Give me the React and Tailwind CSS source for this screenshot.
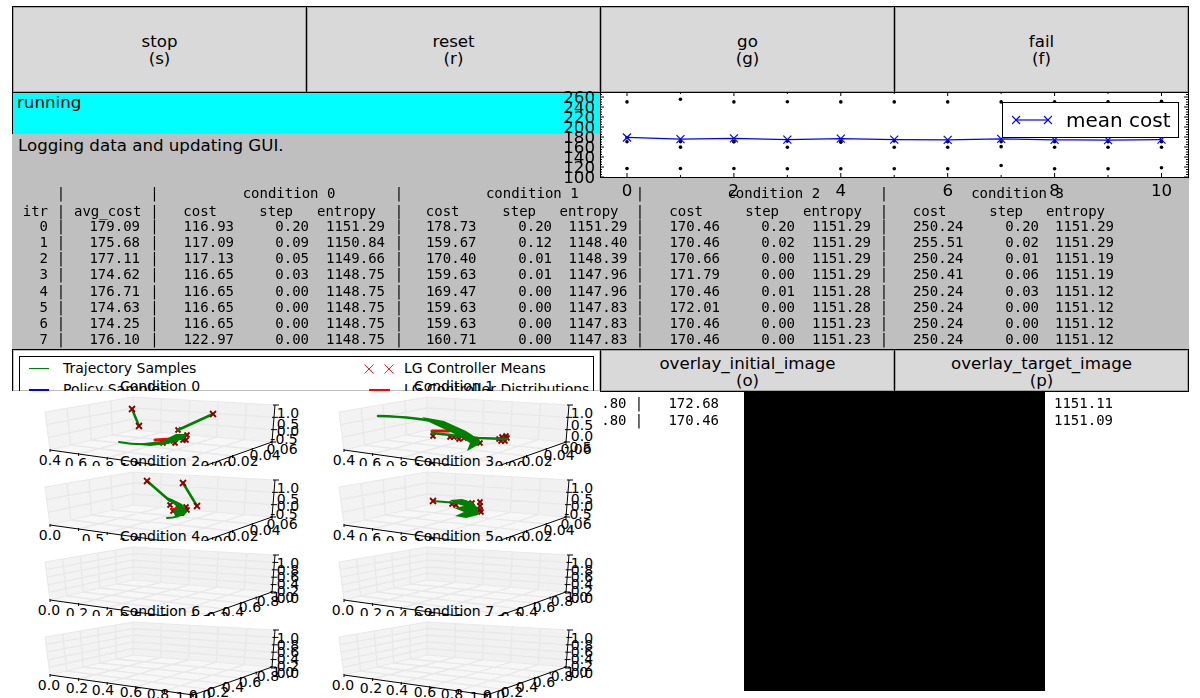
import React from 'react';

const GREEN = '#008000';
const DARK = '#8b0000';

const logRows = [
  ['0', '179.09', '116.93', '0.20', '1151.29', '178.73', '0.20', '1151.29', '170.46', '0.20', '1151.29', '250.24', '0.20', '1151.29'],
  ['1', '175.68', '117.09', '0.09', '1150.84', '159.67', '0.12', '1148.40', '170.46', '0.02', '1151.29', '255.51', '0.02', '1151.29'],
  ['2', '177.11', '117.13', '0.05', '1149.66', '170.40', '0.01', '1148.39', '170.66', '0.00', '1151.29', '250.24', '0.01', '1151.19'],
  ['3', '174.62', '116.65', '0.03', '1148.75', '159.63', '0.01', '1147.96', '171.79', '0.00', '1151.29', '250.41', '0.06', '1151.19'],
  ['4', '176.71', '116.65', '0.00', '1148.75', '169.47', '0.00', '1147.96', '170.46', '0.01', '1151.28', '250.24', '0.03', '1151.12'],
  ['5', '174.63', '116.65', '0.00', '1148.75', '159.63', '0.00', '1147.83', '172.01', '0.00', '1151.28', '250.24', '0.00', '1151.12'],
  ['6', '174.25', '116.65', '0.00', '1148.75', '159.63', '0.00', '1147.83', '170.46', '0.00', '1151.23', '250.24', '0.00', '1151.12'],
  ['7', '176.10', '122.97', '0.00', '1148.75', '160.71', '0.00', '1147.83', '170.46', '0.00', '1151.23', '250.24', '0.00', '1151.12'],
];

const meanCost = [179.09, 175.68, 177.11, 174.62, 176.71, 174.63, 174.25, 176.1, 174.2, 173.9, 174.6];
const condCosts = [
  [116.93, 178.73, 170.46, 250.24],
  [117.09, 159.67, 170.46, 255.51],
  [117.13, 170.4, 170.66, 250.24],
  [116.65, 159.63, 171.79, 250.41],
  [116.65, 169.47, 170.46, 250.24],
  [116.65, 159.63, 172.01, 250.24],
  [116.65, 159.63, 170.46, 250.24],
  [122.97, 160.71, 170.46, 250.24],
  [116.65, 159.63, 170.46, 250.3],
  [116.65, 159.63, 170.46, 250.24],
  [118.5, 159.63, 170.46, 251.5],
];

const ROW = "grid grid-cols-[36px_26px_66px_29px_65px_75px_76px_28px_63.5px_75.5px_75.5px_25px_67.5px_75px_76px_26px_66.5px_75.5px_75px] leading-[16.25px] whitespace-pre";

const Button = ({ name, hotkey, tall }) => (
  <button className={`border border-black bg-[#d9d9d9] -mr-px text-center leading-[17px] text-[16.67px] shadow-[inset_0_0_0_1px_rgba(0,0,0,0.25)] ${tall ? 'h-[87px]' : 'h-[43px] pt-[2px]'}`}>
    {name}
    <br />
    {hotkey}
  </button>
);

const Sep = () => <div className="text-center">|</div>;
const Num = ({ children }) => <div className="text-right">{children}</div>;

const LogTable = () => (
  <div className="font-['DejaVu_Sans_Mono',monospace] text-[14px] mt-[29px] will-change-transform">
    <div className={`${ROW} h-[18px]`}>
      <div /><Sep /><div /><Sep />
      {[0, 1, 2, 3].map((c) => (
        <React.Fragment key={c}>
          <div className="col-span-3 text-center pl-[24px]">condition {c}</div>
          {c < 3 ? <Sep /> : <div />}
        </React.Fragment>
      ))}
    </div>
    <div className={`${ROW} h-[14.5px]`}>
      <Num>itr</Num><Sep /><Num>avg_cost</Num><Sep />
      {[0, 1, 2, 3].map((c) => (
        <React.Fragment key={c}>
          <div className="text-right pr-[17px]">cost</div>
          <div className="text-right pr-[16px]">step</div>
          <div className="text-right pr-[9px]">entropy</div>
          {c < 3 ? <Sep /> : <div />}
        </React.Fragment>
      ))}
    </div>
    {logRows.map((r) => (
      <div className={`${ROW} h-[16.25px]`} key={r[0]}>
        <Num>{r[0]}</Num><Sep /><Num>{r[1]}</Num><Sep />
        <Num>{r[2]}</Num><Num>{r[3]}</Num><Num>{r[4]}</Num><Sep />
        <Num>{r[5]}</Num><Num>{r[6]}</Num><Num>{r[7]}</Num><Sep />
        <Num>{r[8]}</Num><Num>{r[9]}</Num><Num>{r[10]}</Num><Sep />
        <Num>{r[11]}</Num><Num>{r[12]}</Num><Num>{r[13]}</Num>
      </div>
    ))}
  </div>
);

const Cross = ({ x, y, r = 4, color = '#0000ff', w = 1.2 }) => (
  <path d={`M${x - r} ${y - r}L${x + r} ${y + r}M${x - r} ${y + r}L${x + r} ${y - r}`} stroke={color} strokeWidth={w} fill="none" />
);

// chart coords: origin at top left of the axes frame
const cx = (i) => 27 + 53.45 * i;
const cy = (v) => 85 - (v - 100) * 0.5;

const CostChart = () => {
  const xs = Array.from({ length: 11 }, (_, i) => i);
  const ys = Array.from({ length: 35 }, (_, i) => 100 + i * 5).filter((v) => v < 270);
  return (
    <div className="absolute left-[588px] top-0 w-[589px] h-[86px] bg-white border border-black">
      <svg className="absolute -left-px -top-px overflow-visible" width="589" height="86">
        {xs.map((i) => {
          const len = i % 2 === 0 ? 4 : 2;
          return <path key={i} d={`M${cx(i)} 85V${85 - len}M${cx(i)} 0V${len}`} stroke="#000" fill="none" />;
        })}
        {ys.map((v) => {
          const len = v % 20 === 0 ? 4 : 2;
          return <path key={v} d={`M0 ${cy(v)}H${len}M588 ${cy(v)}H${588 - len}`} stroke="#000" fill="none" />;
        })}
        {condCosts.map((row, i) =>
          row.map((v, j) => <circle key={`${i}-${j}`} cx={cx(i)} cy={cy(v)} r="1.8" fill="#000" />)
        )}
        <polyline
          points={meanCost.map((v, i) => `${cx(i)},${cy(v)}`).join(' ')}
          fill="none"
          stroke="#0000ff"
          strokeWidth="1.2"
        />
        {meanCost.map((v, i) => <Cross key={i} x={cx(i)} y={cy(v)} />)}
        {[100, 120, 140, 160, 180, 200, 220, 240, 260].map((v) => (
          <text key={v} x="-5" y={cy(v) + 6} textAnchor="end" fontSize="16.67" fill="#000">{v}</text>
        ))}
        {[0, 2, 4, 6, 8, 10].map((i) => (
          <text key={i} x={cx(i)} y="104" textAnchor="middle" fontSize="16.67" fill="#000">{i}</text>
        ))}
      </svg>
      <div className="absolute left-[401px] top-[9px] w-[177px] h-[36px] bg-white border border-black flex items-center pl-[9px] gap-[14px] text-[20px]">
        <svg width="40" height="16" className="shrink-0">
          <path d="M4 8H36" stroke="#0000ff" strokeWidth="1.2" fill="none" />
          <Cross x={4} y={8} />
          <Cross x={36} y={8} />
        </svg>
        <span>mean cost</span>
      </div>
    </div>
  );
};

const Legend = () => (
  <div className="h-[43px] border border-black bg-white overflow-hidden pl-[6px] pr-[6px] pt-[6px] -mr-px shadow-[inset_0_0_0_1px_rgba(0,0,0,0.25)]">
    <div className="border border-black h-[60px] pl-[9px] pt-px grid grid-cols-[340px_1fr] text-[14px] leading-[21px]">
      <div>
        <div className="flex items-center gap-[14px]"><span className="w-[20px] h-[1.5px] bg-[#008000]" />Trajectory Samples</div>
        <div className="flex items-center gap-[14px]"><span className="w-[20px] h-[2px] bg-[#0000ff]" />Policy Samples</div>
      </div>
      <div>
        <div className="flex items-center gap-[14px]">
          <svg width="21" height="10" className="shrink-0 overflow-visible">
            <Cross x={0} y={5} r={4.5} color="#ff0000" w={0.9} />
            <Cross x={20} y={5} r={4.5} color="#ff0000" w={0.9} />
          </svg>
          LG Controller Means
        </div>
        <div className="flex items-center gap-[14px]"><span className="w-[21px] h-[2px] bg-[#ff0000]" />LG Controller Distributions</div>
      </div>
    </div>
  </div>
);

const lerp = (a, b, t) => [a[0] + (b[0] - a[0]) * t, a[1] + (b[1] - a[1]) * t];
const seg = (a, b) => `M${a[0]} ${a[1]}L${b[0]} ${b[1]}`;

const A = [50, 59]; // floor, front left
const B = [133, 39]; // floor, back corner
const C = [272, 51]; // floor, back right
const D = [193, 79]; // floor, front right
const LT = [45, 21];
const BT = [133, 6];
const RT = [275, 14];

const Axes3D = ({ index, nx, ny, nz, xLabels, yLabels, zLabels, children }) => {
  const col = index % 2;
  const lines = [];
  for (let i = 1; i < nx; i++) {
    const t = i / nx;
    const bot = lerp(B, C, t);
    lines.push(seg(bot, lerp(BT, RT, t)));
    lines.push(seg(bot, lerp(A, D, t)));
  }
  for (let i = 1; i < ny; i++) {
    const t = i / ny;
    const bot = lerp(A, B, t);
    lines.push(seg(bot, lerp(LT, BT, t)));
    lines.push(seg(bot, lerp(D, C, t)));
  }
  for (let i = 1; i < nz; i++) {
    const t = i / nz;
    const m = lerp(B, BT, t);
    lines.push(seg(lerp(A, LT, t), m));
    lines.push(seg(m, lerp(C, RT, t)));
  }
  const ticks = [];
  for (let i = 0; i <= nz; i++) {
    const p = lerp(C, RT, i / nz);
    ticks.push(`M${p[0] - 2} ${p[1]}H${p[0] + 4}`);
  }
  for (let i = 0; i <= nx; i++) {
    const p = lerp(A, D, i / nx);
    ticks.push(`M${p[0]} ${p[1] - 1}V${p[1] + 2}`);
  }
  for (let i = 0; i <= ny; i++) {
    const p = lerp(D, C, i / ny);
    ticks.push(`M${p[0]} ${p[1] - 1}V${p[1] + 2}`);
  }
  return (
    <div className="relative h-[75px] bg-white">
      <svg
        className="absolute left-0 top-0 overflow-visible"
        width="300"
        height="75"
        viewBox={col ? '6 0 300 75' : '0 0 300 75'}
      >
        <polygon points={[LT, BT, B, A].join(' ')} fill="#f3f3f3" />
        <polygon points={[BT, RT, C, B].join(' ')} fill="#f1f1f1" />
        <polygon points={[A, B, C, D].join(' ')} fill="#f7f7f7" />
        <path d={seg(LT, BT) + seg(BT, RT) + seg(BT, B) + seg(LT, A) + seg(A, B) + seg(B, C)} stroke="#e8e8e8" fill="none" />
        <path d={lines.join('')} stroke="#e8e8e8" strokeWidth="1.3" fill="none" />
        <path d={seg(A, D) + seg(D, C) + seg(C, RT)} stroke="#000" fill="none" />
        <path d={ticks.join('')} stroke="#000" fill="none" />
        {children}
        <text x="160" y="0" textAnchor="middle" fontSize="14" fill="#000">Condition {index}</text>
        {[...xLabels, ...yLabels, ...zLabels].map(([t, x, y]) => (
          <text key={`${t}-${x}`} x={x} y={y} textAnchor="middle" fontSize="14" fill="#000">{t}</text>
        ))}
      </svg>
    </div>
  );
};

const Reds = ({ pts, r = 2.5 }) => pts.map(([x, y], i) => <Cross key={i} x={x} y={y} r={r} color={DARK} w={1.8} />);
const Path3 = ({ d, w = 2, c = GREEN }) => <path d={d} stroke={c} strokeWidth={w} fill="none" strokeLinecap="round" strokeLinejoin="round" />;
const Blob = ({ points }) => <polygon points={points} fill={GREEN} />;

const traj0 = (
  <>
    <Path3 d="M155 49L172 48" c="#ff0000" w={3} />
    <Reds pts={[[163, 52], [170, 50], [175, 52], [183, 49], [186, 49], [187, 44], [178, 39]]} />
    <Path3 d="M132 18L139 35" w={2.5} />
    <Path3 d="M213 23L178 39" w={2.5} />
    <Path3 d="M119 51Q140 55 163 52" w={2} />
    <Blob points="135,53 162,50 176,43 186,43 184,48 168,53 150,55" />
    <Reds pts={[[132, 18], [213, 23], [139, 35]]} r={3} />
  </>
);

const traj1 = (
  <>
    <Path3 d="M138 40L155 40" c="#ff0000" w={3} />
    <Reds pts={[[139, 45], [156, 46], [160, 46], [165, 48], [186, 52], [205, 48], [208, 46], [211, 50], [213, 47], [170, 47], [207, 50], [212, 45]]} />
    <Path3 d="M84 25Q125 26 150 33" w={2.5} />
    <Blob points="128,26 150,30 172,40 186,49 184,54 173,60 176,52 165,45 150,38 135,31" />
    <Path3 d="M138 42L184 47L213 48" w={2.5} />
  </>
);

const traj2 = (
  <>
    <Reds pts={[[170, 39], [187, 44], [186, 41], [173, 45]]} />
    <Path3 d="M147 15L170 35" w={2.5} />
    <Path3 d="M183 17L197 40" w={2.5} />
    <Path3 d="M167 52Q178 52 186 46" />
    <Blob points="164,30 172,33 182,38 187,45 184,50 175,50 173,44 176,40 170,35" />
    <Path3 d="M171 43L176 43" c="#ff0000" w={2} />
    <Reds pts={[[147, 15], [183, 17], [197, 40]]} r={3} />
  </>
);

const traj3 = (
  <>
    <Reds pts={[[158, 38], [162, 39], [178, 37], [186, 36], [186, 40], [186, 44], [187, 46]]} />
    <Path3 d="M139 35L163 37" w={2} />
    <Blob points="156,34 168,33 178,36 184,42 184,49 172,52 161,50 170,46 160,42 170,40 160,37" />
    <Reds pts={[[139, 35]]} r={3} />
  </>
);

const x04 = [['0.4', 50, 74], ['0.6', 76, 77], ['0.8', 103, 80], ['1.0', 131, 82]];
const x05 = [['0.0', 50, 74], ['0.5', 93, 78], ['1.0', 130, 82]];
const x02 = [['0.0', 49, 74], ['0.2', 77, 77], ['0.4', 103, 79], ['0.6', 131, 81], ['0.8', 158, 83], ['1.0', 187, 86]];
const y06 = [['0.00', 216, 80], ['0.02', 243, 75], ['0.04', 265, 69], ['0.06', 282, 63]];
const y10 = [['0.0', 200, 84], ['0.2', 218, 81], ['0.4', 233, 76], ['0.6', 250, 71], ['0.8', 268, 65], ['1.0', 283, 61]];
const z15 = [['1.0', 288, 27], ['0.5', 288, 38], ['0.0', 288, 45], ['-0.5', 284, 53]];
const z15b = [['1.0', 288, 27], ['0.5', 288, 39], ['0.0', 288, 50], ['-0.5', 284, 61]];
const z10 = [['1.0', 288, 27], ['0.8', 288, 34], ['0.6', 288, 41], ['0.4', 288, 48], ['0.2', 288, 55], ['0.0', 288, 62]];

const panels = [
  { nx: 5, ny: 4, nz: 3, xLabels: x04, yLabels: y06, zLabels: z15, traj: traj0 },
  { nx: 5, ny: 4, nz: 3, xLabels: x04, yLabels: y06, zLabels: z15b, traj: traj1 },
  { nx: 5, ny: 4, nz: 3, xLabels: x05, yLabels: y06, zLabels: z15, traj: traj2 },
  { nx: 5, ny: 4, nz: 3, xLabels: x04, yLabels: y06, zLabels: z15, traj: traj3 },
  { nx: 5, ny: 5, nz: 5, xLabels: x02, yLabels: y10, zLabels: z10 },
  { nx: 5, ny: 5, nz: 5, xLabels: x02, yLabels: y10, zLabels: z10 },
  { nx: 5, ny: 5, nz: 5, xLabels: x02, yLabels: y10, zLabels: z10 },
  { nx: 5, ny: 5, nz: 5, xLabels: x02, yLabels: y10, zLabels: z10 },
];

const App = () => {
  return (
    <div className="relative w-[1200px] h-[698px] overflow-hidden bg-white text-black pt-[6px] font-['DejaVu_Sans',sans-serif]">
      <div className="ml-[12px] w-[1176px] grid grid-cols-4">
        <Button tall name="stop" hotkey="(s)" />
        <Button tall name="reset" hotkey="(r)" />
        <Button tall name="go" hotkey="(g)" />
        <Button tall name="fail" hotkey="(f)" />
      </div>

      <div className="relative ml-[12px] w-[1177px] -mt-px">
        <div className="w-[588px] h-[42px] bg-[#00ffff] border-l border-t border-black pl-[4px] text-[16.67px] leading-[19px]">running</div>
        <div className="h-[215px] bg-[#bfbfbf]">
          <div className="pl-[6px] pt-[2px] text-[16.67px] leading-[20px]">Logging data and updating GUI.</div>
          <LogTable />
        </div>
        <CostChart />
      </div>

      <div className="ml-[12px] w-[1176px] grid grid-cols-[588px_294px_294px]">
        <Legend />
        <Button name="overlay_initial_image" hotkey="(o)" />
        <Button name="overlay_target_image" hotkey="(p)" />
      </div>

      <div className="flex -mt-px">
        <div className="w-[600px] grid grid-cols-2">
          {panels.map((p, i) => (
            <Axes3D key={i} index={i} nx={p.nx} ny={p.ny} nz={p.nz} xLabels={p.xLabels} yLabels={p.yLabels} zLabels={p.zLabels}>
              {p.traj}
            </Axes3D>
          ))}
        </div>
        <div className="relative flex-1 flex font-['DejaVu_Sans_Mono',monospace] text-[14px] leading-[17px] will-change-transform">
          <div className="w-[144px] pt-[4px] whitespace-pre">
            {['172.68', '170.46'].map((v) => (
              <div className="grid grid-cols-[26.5px_25px_67.5px]" key={v}>
                <div className="text-right">.80</div>
                <div className="text-center">|</div>
                <div className="text-right">{v}</div>
              </div>
            ))}
          </div>
          <div className="w-[301px] h-[300px] bg-black" />
          <div className="pl-[9px] pt-[4px]">
            <div>1151.11</div>
            <div>1151.09</div>
          </div>
        </div>
      </div>
    </div>
  );
};

export default App;
